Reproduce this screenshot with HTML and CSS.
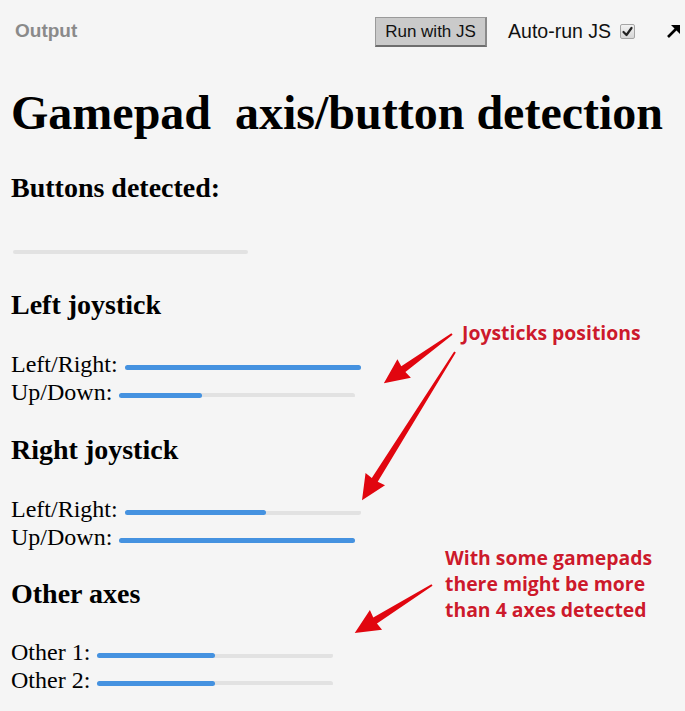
FILE: index.html
```html
<!DOCTYPE html>
<html>
<head>
<meta charset="utf-8">
<link rel="stylesheet" href="styles.css">
</head>
<body>
<header class="topbar">
  <span class="out-label">Output</span>
  <div class="controls">
    <button class="run-btn">Run with JS</button>
    <span class="autorun">Auto-run JS</span>
    <span class="checkbox"><svg width="13" height="13" viewBox="0 0 13 13"><path d="M2.5 7 L5.5 10 L10.5 3" fill="none" stroke="#222" stroke-width="2.2" stroke-linecap="round" stroke-linejoin="round"/></svg></span>
    <svg class="popout" width="15" height="15" viewBox="0 0 15 15"><polygon points="5,1 14,1 14,10" fill="#000"/><line x1="2" y1="13" x2="10.5" y2="4.5" stroke="#000" stroke-width="2.6"/></svg>
  </div>
</header>

<main class="content">
  <h1>Gamepad &nbsp;axis/button detection</h1>
  <h3>Buttons detected:</h3>
  <div class="buttons-track"></div>

  <h3>Left joystick</h3>
  <div class="row">Left/Right: <span class="bar"><span class="fill" style="width:100%"></span></span></div>
  <div class="row">Up/Down: <span class="bar"><span class="fill" style="width:35%"></span></span></div>

  <h3>Right joystick</h3>
  <div class="row">Left/Right: <span class="bar"><span class="fill" style="width:60%"></span></span></div>
  <div class="row">Up/Down: <span class="bar"><span class="fill" style="width:100%"></span></span></div>

  <h3 class="h-other">Other axes</h3>
  <div class="row">Other 1: <span class="bar"><span class="fill" style="width:50%"></span></span></div>
  <div class="row">Other 2: <span class="bar"><span class="fill" style="width:50%"></span></span></div>
</main>

<div class="notes">
  <svg class="arrows" width="685" height="711" viewBox="0 0 685 711">
    <g fill="#e1060f">
      <path transform="translate(452,334) rotate(144.2)" d="M0,-1 L60,-3.5 L59,-11.5 L84,0 L59,11.5 L60,3.5 L0,1 Z"/>
      <path transform="translate(455,352) rotate(122.1)" d="M0,-1 L151,-3.5 L150,-11.5 L175,0 L150,11.5 L151,3.5 L0,1 Z"/>
      <path transform="translate(432,585) rotate(148.1)" d="M0,-1 L67,-3.5 L66,-11.5 L91,0 L66,11.5 L67,3.5 L0,1 Z"/>
    </g>
  </svg>
  <div class="note note-joy">Joysticks positions</div>
  <div class="note note-axes">With some gamepads<br>there might be more<br>than 4 axes detected</div>
</div>
</body>
</html>
```

FILE: styles.css
```css
html, body {
  margin: 0;
  padding: 0;
  background: #f5f5f5;
}
body {
  width: 685px;
  height: 711px;
  overflow: hidden;
  position: relative;
  font-family: "Liberation Serif", "Times New Roman", serif;
  color: #000;
}
.topbar {
  height: 62px;
  display: flex;
  align-items: center;
  justify-content: space-between;
  padding: 0 4px 0 15px;
  font-family: "Liberation Sans", Arial, sans-serif;
}
.out-label {
  color: #8a8a8a;
  font-weight: bold;
  font-size: 19px;
}
.controls {
  display: flex;
  align-items: center;
}
.run-btn {
  width: 112px;
  height: 30px;
  margin: 2px 0 0 0;
  padding: 0;
  background: #cacaca;
  border: 1px solid #9a9a9a;
  border-bottom: 2px solid #6e6e6e;
  border-right: 2px solid #8a8a8a;
  font-family: "Liberation Sans", Arial, sans-serif;
  font-size: 17px;
  color: #111;
}
.autorun {
  margin-left: 21px;
  font-size: 19.5px;
  color: #111;
}
.checkbox {
  width: 13px;
  height: 13px;
  margin-left: 9px;
  border: 1px solid #a5a5a5;
  border-radius: 2px;
  background: linear-gradient(#f2f2f2, #d6d6d6);
  display: flex;
}
.checkbox svg { width: 13px; height: 13px; }
.popout {
  margin-left: 31px;
}
.content {
  padding: 0 11px;
}
h1 {
  font-size: 48px;
  line-height: 56px;
  font-weight: bold;
  margin: 23px 0 31px 0;
}
h3 {
  font-size: 28px;
  line-height: 32px;
  font-weight: bold;
  margin: 28px 0 30px 0;
}
h3.h-other {
  margin-top: 27px;
  margin-bottom: 29px;
}
.buttons-track {
  width: 235px;
  height: 4px;
  margin: 46px 0 35px 2px;
  background: #e2e2e2;
  border-radius: 2px;
}
.row {
  font-size: 24px;
  line-height: 27.5px;
  white-space: nowrap;
}
.bar {
  display: inline-block;
  width: 236px;
  height: 5px;
  margin-left: 1px;
  vertical-align: 2px;
  border-radius: 3px;
  background: linear-gradient(#e2e2e2, #e2e2e2) center / 100% 4px no-repeat;
}
.fill {
  display: block;
  height: 100%;
  background: #4592e0;
  border-radius: 3px;
}
.notes {
  position: absolute;
  inset: 0;
  pointer-events: none;
}
.arrows {
  position: absolute;
  left: 0;
  top: 0;
}
.note {
  position: absolute;
  font-family: "Open Sans", "Noto Sans", sans-serif;
  font-weight: bold;
  color: #cc1a2c;
  font-size: 19.4px;
  line-height: 26px;
  white-space: nowrap;
  text-shadow: 0 0 2px #fff;
}
.note-joy {
  left: 462px;
  top: 320px;
}
.note-axes {
  left: 445px;
  top: 545px;
}
```
